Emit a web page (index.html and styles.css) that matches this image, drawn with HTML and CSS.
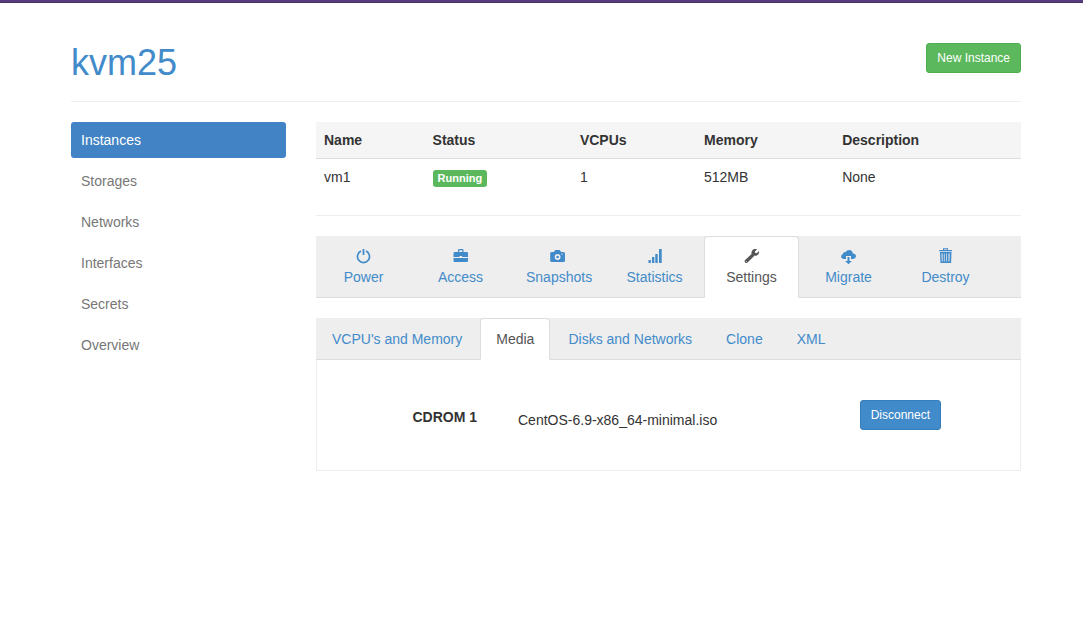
FILE: index.html
```html
<!DOCTYPE html>
<html lang="en">
<head>
<meta charset="utf-8">
<title>kvm25</title>
<link rel="stylesheet" href="styles.css">
</head>
<body>
<div class="topbar"></div>
<div class="container">
  <header class="page-header">
    <h1><a href="#">kvm25</a></h1>
    <button type="button" class="btn btn-success">New Instance</button>
  </header>
  <div class="layout">
    <nav class="sidebar">
      <a class="active" href="#">Instances</a>
      <a href="#">Storages</a>
      <a href="#">Networks</a>
      <a href="#">Interfaces</a>
      <a href="#">Secrets</a>
      <a href="#">Overview</a>
    </nav>
    <main class="main">
      <table class="instances">
        <thead>
          <tr><th class="col-name">Name</th><th class="col-status">Status</th><th class="col-cpu">VCPUs</th><th class="col-memory">Memory</th><th>Description</th></tr>
        </thead>
        <tbody>
          <tr><td>vm1</td><td><span class="label">Running</span></td><td>1</td><td>512MB</td><td>None</td></tr>
        </tbody>
      </table>
      <nav class="tabs tabs-icons">
        <a href="#"><svg class="icon" viewBox="0 0 15 16"><path d="M5 3.100A6 6 0 1 0 10 3.100" fill="none" stroke="currentColor" stroke-width="1.700"/><path d="M6.600 1h1.800v6H6.600z"/></svg>Power</a>
        <a href="#"><svg class="icon" viewBox="0 0 15 16"><path d="M5 4V2.200Q5 1 6.200 1h3.100q1.200 0 1.200 1.200V4h3.300q1.200 0 1.200 1.200V9H9V8H6.500v1H.5V5.200Q.5 4 1.700 4zm1.200 0h3.100V2.200H6.200z"/><path d="M.5 10H15v2.800q0 1.200-1.200 1.200H1.700Q.5 14 .5 12.800z"/></svg>Access</a>
        <a href="#"><svg class="icon" viewBox="0 0 15 16"><path d="M1.500 4h2.300L5.300 2h4.400l1.500 2h2.300Q15 4 15 5.500v7q0 1.500-1.500 1.500h-12Q.2 14 .2 12.500v-7Q.2 4 1.500 4z"/><circle cx="7.600" cy="9" r="2.100" fill="none" stroke="#eee" stroke-width="1.600"/><path d="M11.500 5.500h1.200v1h-1.200z" fill="#eee"/></svg>Snapshots</a>
        <a href="#"><svg class="icon" viewBox="0 0 15 16"><path d="M1.500 12h2.300v3H1.500zM5 9h2.300v6H5zM8.300 6h2.400v9H8.300zM12 1h2.700v14H12z"/></svg>Statistics</a>
        <a class="active" href="#"><svg class="icon" viewBox="0 0 15 16"><path d="M10.500 1Q12 .7 13.200 1.200L10.900 3.500l.4 1.400 1.400.4 2.200-2.200q.5 2-1 3.700-1.400 1.300-3.300.7L3.600 14.600q-1.200 1-2.500-.1-1-1.300 0-2.500L7.600 6Q7 4.200 8.200 2.400 9.100 1.200 10.500 1zM1.900 12.900v.8h.8v-.8z"/></svg>Settings</a>
        <a href="#"><svg class="icon" viewBox="0 0 15 16"><path d="M10 11V8H5v3H3Q.1 10.900.1 8.500.1 6.500 2 6.100 1.900 4.200 3.600 3.900q.6 0 1 .3Q5.600 1.900 8.200 1.900q3.300.2 3.700 3.700 3.100.1 3.100 2.700-.2 2.500-3 2.700z"/><path d="M6.500 9h2v4h2.400L7.500 16.200 4.100 13h2.400z"/></svg>Migrate</a>
        <a href="#"><svg class="icon" viewBox="0 0 15 16"><path fill-rule="evenodd" d="M5 2V.200h5V2h4v1.300H1.200V2zm1.200-.8V2h2.600v-.8z"/><path fill-rule="evenodd" d="M2 4h11.500l-.4 11H2.400zM3.500 5.500l.3 8h.8v-8zm2.400 0v8h.7v-8zm2.300 0v8h.7v-8zm2.300 0v8h.9l.3-8z"/></svg>Destroy</a>
      </nav>
      <nav class="tabs tabs-text">
        <a href="#">VCPU's and Memory</a>
        <a class="active" href="#">Media</a>
        <a href="#">Disks and Networks</a>
        <a href="#">Clone</a>
        <a href="#">XML</a>
      </nav>
      <form class="media">
        <strong class="media-label">CDROM 1</strong>
        <span class="media-file">CentOS-6.9-x86_64-minimal.iso</span>
        <button type="button" class="btn btn-primary">Disconnect</button>
      </form>
    </main>
  </div>
</div>
</body>
</html>
```
FILE: styles.css
```css
* { box-sizing: border-box; }

body {
  margin: 0;
  background: #fff;
  color: #333;
  font: 14px/20px "Liberation Sans", Arial, sans-serif;
}

a { color: #428bca; text-decoration: none; }

.topbar {
  height: 3px;
  background: #563d7c;
  border-bottom: 1px solid #463265;
}

.container { padding: 40px 62px 0 71px; }

.page-header {
  display: flex;
  justify-content: space-between;
  align-items: flex-start;
  margin-bottom: 20px;
  padding-bottom: 18px;
  border-bottom: 1px solid #eee;
}

.page-header h1 {
  margin: 0;
  font-size: 36px;
  font-weight: 400;
  line-height: 40px;
}

.btn {
  padding: 5px 10px;
  border: 1px solid;
  border-radius: 3px;
  color: #fff;
  font: 12px/18px "Liberation Sans", Arial, sans-serif;
}

.btn-success { background: #5cb85c; border-color: #4cae4c; }
.btn-primary { background: #428bca; border-color: #357ebd; }

.layout {
  display: grid;
  grid-template-columns: 215px 1fr;
  gap: 30px;
}

.sidebar {
  display: flex;
  flex-direction: column;
  gap: 5px;
}

.sidebar a {
  padding: 8px 10px;
  border-radius: 3px;
  color: #777;
}

.sidebar .active { background: #4183c4; color: #fff; }

.main { min-width: 0; }

.instances {
  width: 100%;
  table-layout: fixed;
  border-collapse: separate;
  border-spacing: 0;
  padding-bottom: 20px;
  border-bottom: 1px solid #eee;
}

.instances th,
.instances td { padding: 8px; text-align: left; }

.instances th { background: #f5f5f5; border-bottom: 1px solid #ddd; }

.col-name { width: 15.4%; }
.col-status { width: 20.9%; }
.col-cpu { width: 17.6%; }
.col-memory { width: 19.6%; }

.label {
  display: inline-block;
  padding: 2px 5px;
  border-radius: 3px;
  background: #5cb85c;
  color: #fff;
  font-size: 11px;
  font-weight: 700;
  line-height: 13px;
}

.instances td { height: 36px; line-height: 20px; }

.tabs {
  display: flex;
  gap: 2px;
  margin-top: 20px;
  background: #eee;
  border-bottom: 1px solid #ddd;
}

.tabs a {
  margin-bottom: -1px;
  padding: 10px 15px;
  border: 1px solid transparent;
  border-radius: 4px 4px 0 0;
}

.tabs .active {
  background: #fff;
  border-color: #ddd #ddd #fff;
  color: #555;
}

.tabs-icons a { width: 95px; text-align: center; white-space: nowrap; }

.icon {
  display: block;
  width: 15px;
  height: 16px;
  margin: 1px auto 3px;
  fill: currentColor;
}

.media {
  display: grid;
  grid-template-columns: 160px 1fr auto;
  column-gap: 41px;
  align-items: start;
  padding: 40px 79px 40px 0;
  border: 1px solid #eee;
  border-top: 0;
}

.media-label { padding-top: 7px; text-align: right; }
.media-file { padding-top: 10px; }
```
